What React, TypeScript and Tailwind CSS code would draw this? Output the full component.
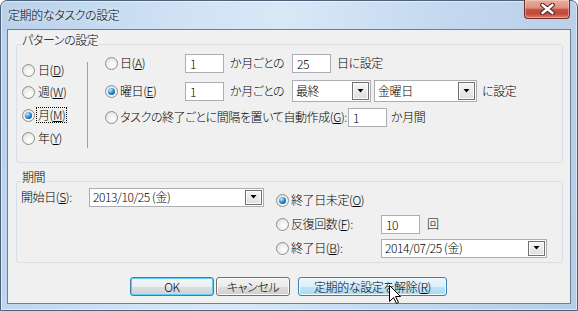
import type { ReactNode } from "react";

const Accel = ({ children }: { children: ReactNode }) => (
  <span className="underline underline-offset-[1px]">{children}</span>
);

const Radio = ({ checked = false }: { checked?: boolean }) => (
  <span className="flex h-[13px] w-[13px] shrink-0 items-center justify-center rounded-full border border-[#8e8f8f] bg-[radial-gradient(circle_at_60%_65%,#ffffff_0%,#ededed_55%,#d3d3d3_100%)]">
    {checked && (
      <span className="h-[7px] w-[7px] rounded-full bg-[radial-gradient(circle_at_35%_30%,#c8eeff_0%,#409ce2_40%,#14599a_75%,#0a3464_100%)]" />
    )}
  </span>
);

const TextBox = ({ value, className }: { value: string; className: string }) => (
  <div className={`h-[19px] shrink-0 border border-[#abadb3] bg-white pl-[4px] leading-[17px] ${className}`}>
    {value}
  </div>
);

const DropButton = () => (
  <span className="my-[1px] flex w-[17px] items-center justify-center self-stretch border border-[#707070] bg-[linear-gradient(#f6f6f6,#dedede)] shadow-[inset_0_0_0_1px_#fbfbfb]">
    <svg width="7" height="4" viewBox="0 0 7 4">
      <path d="M0.5 0h6L3.5 3.5z" fill="#000" />
    </svg>
  </span>
);

const Combo = ({ value, className }: { value: string; className: string }) => (
  <div className={`flex shrink-0 items-stretch justify-between border border-[#abadb3] bg-white pl-[3px] pr-[1px] ${className}`}>
    <span className="self-center">{value}</span>
    <DropButton />
  </div>
);

const Group = ({ title, className, children }: { title: string; className: string; children: ReactNode }) => (
  <div className={`ml-[8px] mr-[7px] rounded-[3px] border border-[#d5dfe5] ${className}`}>
    <div className="-mt-[12px] -mb-[2px] ml-[4px] w-fit bg-[#f0f0f0] px-[1px]">{title}</div>
    {children}
  </div>
);

const Button = ({ children, className }: { children: ReactNode; className: string }) => (
  <div className={`flex h-[19px] shrink-0 items-center justify-center rounded-[3px] border ${className}`}>
    {children}
  </div>
);

const CloseButton = () => (
  <div className="-mt-[1px] ml-auto mr-[1px] flex h-[19px] w-[46px] items-center justify-center rounded-b-[4px] border border-t-0 border-[#6a2f2a] bg-[linear-gradient(#e9ada0_0%,#dc8f80_45%,#c75443_52%,#c4473a_75%,#e07c62_100%)] shadow-[inset_0_0_0_1px_rgba(255,220,210,0.45)]">
    <svg width="15" height="12" viewBox="0 0 15 12">
      <path d="M2.5 2L12.5 10M12.5 2L2.5 10" stroke="#4a2420" strokeWidth="4.6" strokeLinecap="round" />
      <path d="M2.5 2L12.5 10M12.5 2L2.5 10" stroke="#ffffff" strokeWidth="2.6" strokeLinecap="round" />
    </svg>
  </div>
);

const Cursor = () => (
  <svg className="absolute left-[389px] top-[285px]" width="13" height="20" viewBox="0 0 13 20">
    <path d="M0.5 0.5V16.5L4.5 12.5L7.5 18.5L9.5 17.5L6.5 11.5H11.5Z" fill="#fff" stroke="#000" strokeLinejoin="miter" />
  </svg>
);

export default function App() {
  return (
    <div className="relative h-[311px] w-[578px] overflow-hidden font-['Noto_Sans_CJK_JP',sans-serif] text-[12px] font-light leading-[14px] tracking-[-0.4px] text-black [font-feature-settings:'palt']">
      <div className="flex h-full w-full flex-col rounded-t-[7px] border border-[#4d627a] bg-[linear-gradient(100deg,#b8d0ea_0%,#cde0f3_25%,#d9e8f7_45%,#c4d9ef_70%,#b6cde7_100%)] px-[6px] pb-[6px] shadow-[inset_0_0_0_1px_rgba(255,255,255,0.5)]">
        <div className="flex h-[28px] shrink-0 items-start">
          <span className="mt-[7px] pl-[1px] [text-shadow:0_0_6px_#ffffff]">定期的なタスクの設定</span>
          <CloseButton />
        </div>

        <div className="flex flex-1 flex-col border border-[#6c7f94] bg-[#f0f0f0]">
          <Group title="パターンの設定" className="mt-[14px] h-[119px]">
            <div className="flex">
              <div className="w-[70px] pl-[5px]">
                <div className="mt-[16px] flex h-[18px] items-center gap-[1px]">
                  <Radio />
                  <span className="border border-transparent px-[1px]">日(<Accel>D</Accel>)</span>
                </div>
                <div className="mt-[4px] flex h-[18px] items-center gap-[1px]">
                  <Radio />
                  <span className="border border-transparent px-[1px]">週(<Accel>W</Accel>)</span>
                </div>
                <div className="mt-[5px] flex h-[18px] items-center gap-[1px]">
                  <Radio checked />
                  <span className="border border-dotted border-black px-[1px]">月(<Accel>M</Accel>)</span>
                </div>
                <div className="mt-[5px] flex h-[18px] items-center gap-[1px]">
                  <Radio />
                  <span className="border border-transparent px-[1px]">年(<Accel>Y</Accel>)</span>
                </div>
              </div>

              <div className="mt-[17px] h-[86px] w-px bg-[#a0a0a0]" />

              <div className="pl-[17px]">
                <div className="mt-[7px] flex h-[22px] items-center">
                  <div className="flex w-[80px] items-center gap-[2px]">
                    <Radio />
                    <span>日(<Accel>A</Accel>)</span>
                  </div>
                  <TextBox value="1" className="w-[39px]" />
                  <span className="ml-[6px] w-[62px]">か月ごとの</span>
                  <TextBox value="25" className="w-[39px]" />
                  <span className="ml-[6px]">日に設定</span>
                </div>
                <div className="mt-[6px] flex h-[22px] items-center">
                  <div className="flex w-[80px] items-center gap-[2px]">
                    <Radio checked />
                    <span>曜日(<Accel>E</Accel>)</span>
                  </div>
                  <TextBox value="1" className="w-[39px]" />
                  <span className="ml-[6px] w-[62px]">か月ごとの</span>
                  <Combo value="最終" className="h-[22px] w-[79px]" />
                  <Combo value="金曜日" className="ml-[3px] h-[22px] w-[103px]" />
                  <span className="ml-[5px]">に設定</span>
                </div>
                <div className="mt-[4px] flex h-[22px] items-center">
                  <div className="flex w-[243px] items-center gap-[2px]">
                    <Radio />
                    <span className="whitespace-nowrap">タスクの終了ごとに間隔を置いて自動作成(<Accel>G</Accel>):</span>
                  </div>
                  <TextBox value="1" className="w-[39px]" />
                  <span className="ml-[4px]">か月間</span>
                </div>
              </div>
            </div>
          </Group>

          <Group title="期間" className="mt-[18px] h-[82px]">
            <div className="flex items-start">
              <div className="mt-[4px] flex h-[22px] items-center pl-[4px]">
                <span className="w-[68px]">開始日(<Accel>S</Accel>):</span>
                <Combo value="2013/10/25 (金)" className="h-[19px] w-[175px]" />
              </div>
              <div className="ml-[12px] mt-[7px] flex flex-col">
                <div className="flex h-[22px] items-center gap-[2px]">
                  <Radio checked />
                  <span>終了日未定(<Accel>O</Accel>)</span>
                </div>
                <div className="mt-[2px] flex h-[22px] items-center">
                  <div className="flex w-[105px] items-center gap-[2px]">
                    <Radio />
                    <span>反復回数(<Accel>F</Accel>):</span>
                  </div>
                  <TextBox value="10" className="w-[39px]" />
                  <span className="ml-[7px]">回</span>
                </div>
                <div className="mt-[2px] flex h-[22px] items-center">
                  <div className="flex w-[105px] items-center gap-[2px]">
                    <Radio />
                    <span>終了日(<Accel>B</Accel>):</span>
                  </div>
                  <Combo value="2014/07/25 (金)" className="h-[19px] w-[166px]" />
                </div>
              </div>
            </div>
          </Group>

          <div className="ml-[122px] mt-[14px] flex">
            <Button className="w-[84px] border-[#3c7fb1] bg-[linear-gradient(#f4f6f8_0%,#eceef0_50%,#dcdfe2_50%,#cfd3d6_100%)] shadow-[inset_0_0_0_1px_#5ed0f5]">
              OK
            </Button>
            <Button className="ml-[2px] w-[74px] border-[#707070] bg-[linear-gradient(#f2f2f2_0%,#ebebeb_50%,#dddddd_50%,#cfcfcf_100%)] shadow-[inset_0_0_0_1px_#fbfbfb]">
              キャンセル
            </Button>
            <Button className="ml-[8px] w-[149px] border-[#3c7fb1] bg-[linear-gradient(#eaf6fd_0%,#d9f0fc_50%,#bee6fd_50%,#a7d9f5_100%)] shadow-[inset_0_0_0_1px_#f4fbff]">
              定期的な設定を解除(<Accel>R</Accel>)
            </Button>
          </div>
        </div>
      </div>
      <Cursor />
    </div>
  );
}
